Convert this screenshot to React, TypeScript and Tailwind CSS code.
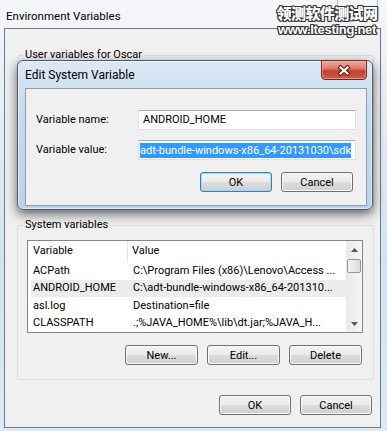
import React from "react";

const rows = [
  { name: "ACPath", value: "C:\\Program Files (x86)\\Lenovo\\Access ..." },
  { name: "ANDROID_HOME", value: "C:\\adt-bundle-windows-x86_64-201310...", selected: true },
  { name: "asl.log", value: "Destination=file" },
  { name: "CLASSPATH", value: ".;%JAVA_HOME%\\lib\\dt.jar;%JAVA_H..." },
];

const btnBase =
  "h-[20px] flex items-center justify-center rounded-[3px] border text-[11px] leading-none text-black";
const btnGray =
  "border-[#707070] bg-[linear-gradient(180deg,#f2f2f2_0%,#ebebeb_50%,#dddddd_51%,#cfcfcf_100%)] shadow-[inset_0_0_0_1px_#fbfbfb]";
const btnDefault =
  "border-[#3c7fb1] bg-[linear-gradient(180deg,#f2f2f2_0%,#ebebeb_50%,#dddddd_51%,#cfcfcf_100%)] shadow-[inset_0_0_0_1px_#a5d6f3]";

function Button({ label, className }: { label: string; className: string }) {
  return <div className={`${btnBase} ${className}`}>{label}</div>;
}

function Arrow({ up }: { up?: boolean }) {
  return (
    <svg width="7" height="4" viewBox="0 0 7 4">
      <path d={up ? "M0 4 L3.5 0 L7 4 Z" : "M0 0 L3.5 4 L7 0 Z"} fill="#4d5a6e" />
    </svg>
  );
}

const outline =
  "[text-shadow:1px_0_0_#333,-1px_0_0_#333,0_1px_0_#333,0_-1px_0_#333,1px_1px_0_#333,-1px_-1px_0_#333,1px_-1px_0_#333,-1px_1px_0_#333]";

export default function App() {
  return (
    <div className="relative w-[387px] h-[431px] overflow-hidden bg-[linear-gradient(180deg,#f6f7f9_0%,#eef2f7_12%,#d3e2f1_60%,#dce8f4_100%)] font-[Roboto,sans-serif] text-[11px] text-black">
      {/* outer window close button, mostly under the watermark */}
      <div className="absolute left-[337px] top-[-3px] w-[41px] h-[21px] rounded-b-[4px] border border-[#b4bcc6] bg-[linear-gradient(180deg,#f7f8fa,#e9edf2)]" />

      <div className="h-[28px] pl-[6px] pt-[9px] text-[11.5px] leading-[14px]">Environment Variables</div>

      <div className="ml-[4px] w-[377px] h-[400px] border border-[#6f7b88] bg-[#f0f0f0] pl-[12px] pr-[6px]">
        <fieldset className="mt-[19px] border border-[#d5dfe5] rounded-[3px]">
          <legend className="ml-[5px] px-[2px] leading-[14px]">User variables for Oscar</legend>
          <div className="h-[150px]" />
        </fieldset>

        <fieldset className="mt-[5px] border border-[#d5dfe5] rounded-[3px] pb-[14px]">
          <legend className="ml-[5px] px-[2px] leading-[14px]">System variables</legend>
          <div className="mt-[8px] ml-[9px] mr-[10px] h-[93px] border border-[#828790] bg-white flex overflow-hidden">
            <div className="flex-1 flex flex-col">
              <div className="h-[23px] flex items-center">
                <div className="w-[100px] h-full flex items-center pl-[5px] border-r border-[#e5e5e5]">Variable</div>
                <div className="pl-[4px]">Value</div>
              </div>
              {rows.map((r) => (
                <div
                  key={r.name}
                  className={`ml-[3px] h-[17.5px] flex items-center shrink-0 ${
                    r.selected ? "bg-[#ececec]" : ""
                  }`}
                >
                  <div className="w-[97px] pl-[2px] whitespace-nowrap">{r.name}</div>
                  <div className="pl-[5px] whitespace-nowrap">{r.value}</div>
                </div>
              ))}
            </div>
            <div className="w-[16px] flex flex-col bg-[linear-gradient(90deg,#e9e9e9,#f6f6f6)]">
              <div className="h-[17px] flex items-center justify-center">
                <Arrow up />
              </div>
              <div className="mx-[1px] h-[14px] mt-[1px] rounded-[2px] border border-[#959595] bg-[linear-gradient(90deg,#f4f4f4,#dcdcdc)]" />
              <div className="flex-1" />
              <div className="h-[17px] flex items-center justify-center">
                <Arrow />
              </div>
            </div>
          </div>
          <div className="mt-[12px] mr-[11px] flex justify-end gap-[9px]">
            <Button label="New..." className={`w-[73px] ${btnGray}`} />
            <Button label="Edit..." className={`w-[73px] ${btnGray}`} />
            <Button label="Delete" className={`w-[73px] ${btnGray}`} />
          </div>
        </fieldset>

        <div className="mt-[15px] mr-[2px] flex justify-end gap-[9px]">
          <Button label="OK" className={`w-[72px] ${btnGray}`} />
          <Button label="Cancel" className={`w-[72px] ${btnGray}`} />
        </div>
      </div>

      {/* watermark */}
      <div className="absolute left-[275px] top-[5px] w-[104px] flex flex-col items-center text-white">
        <div className={`font-['Noto_Sans_CJK_SC',sans-serif] font-black text-[15px] leading-[16px] tracking-[-0.6px] ${outline}`}>
          领测软件测试网
        </div>
        <div className={`mt-[2px] font-['Liberation_Sans',sans-serif] font-bold text-[13px] leading-[14px] tracking-[-0.3px] ${outline}`}>
          www.ltesting.net
        </div>
      </div>

      {/* Edit System Variable dialog */}
      <div className="absolute left-[17px] top-[60px] w-[356px] h-[150px] rounded-[6px] border border-[#4b5a6b] bg-[linear-gradient(180deg,#dce8f4_0%,#c9dbee_30%,#bcd1e8_100%)] shadow-[0_4px_12px_rgba(0,0,0,0.6),inset_0_0_0_1px_rgba(255,255,255,0.55)] flex flex-col">
        <div className="relative h-[27px] pl-[7px] pt-[7px] text-[12px] leading-[14px]">
          Edit System Variable
          <div className="absolute right-[5px] top-[-1px] w-[46px] h-[20px] rounded-b-[4px] border border-[#6b2a22] bg-[linear-gradient(180deg,#eaa99b_0%,#dc7f6f_40%,#c5412f_55%,#d35a44_100%)] shadow-[inset_0_0_0_1px_rgba(255,200,190,0.5)] flex items-center justify-center">
            <svg width="14" height="11" viewBox="0 0 14 11">
              <path d="M3.5 2.5 L10.5 8.5 M10.5 2.5 L3.5 8.5" stroke="#4a1a12" strokeWidth="4.2" strokeLinecap="square" />
              <path d="M3.5 2.5 L10.5 8.5 M10.5 2.5 L3.5 8.5" stroke="#ffffff" strokeWidth="2.2" strokeLinecap="square" />
            </svg>
          </div>
        </div>
        <div className="ml-[7px] mr-[5px] h-[118px] border border-[#8a9db3] bg-[#f0f0f0] pl-[10px] pt-[21px]">
          <div className="flex items-center h-[20px]">
            <div className="w-[102px]">Variable name:</div>
            <div className="w-[218px] h-[20px] border border-[#dbdfe6] border-t-[#abadb3] bg-white flex items-center pl-[4px]">
              ANDROID_HOME
            </div>
          </div>
          <div className="mt-[10px] flex items-center h-[20px]">
            <div className="w-[102px]">Variable value:</div>
            <div className="w-[218px] h-[20px] border border-[#dbdfe6] border-t-[#abadb3] bg-white flex items-center pl-[1px] overflow-hidden">
              <span className="h-[15px] leading-[15px] bg-[#3399ff] text-white whitespace-nowrap">
                adt-bundle-windows-x86_64-20131030\sdk
              </span>
            </div>
          </div>
          <div className="mt-[12px] pr-[13px] flex justify-end gap-[9px]">
            <Button label="OK" className={`w-[72px] ${btnDefault}`} />
            <Button label="Cancel" className={`w-[72px] ${btnGray}`} />
          </div>
        </div>
      </div>
    </div>
  );
}
